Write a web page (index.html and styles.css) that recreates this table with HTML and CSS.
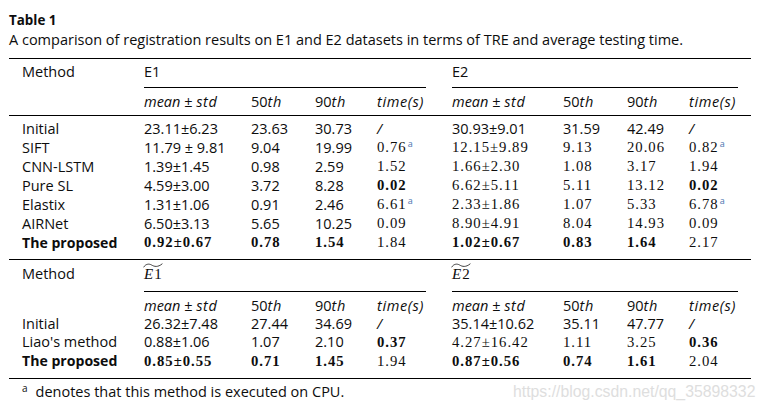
FILE: index.html
```html
<!DOCTYPE html>
<html lang="en">
<head>
<meta charset="utf-8">
<title>Table 1</title>
<link rel="stylesheet" href="styles.css">
</head>
<body>
<div class="page">
  <div class="title">Table 1</div>
  <div class="caption">A comparison of registration results on E1 and E2 datasets in terms of TRE and average testing time.</div>
  <div class="table">
    <div class="grid head">
      <div class="m">Method</div>
      <div class="group g1">E1</div>
      <div class="group g2">E2</div>
    </div>
    <div class="grid sub">
      <div></div>
      <div><span class="it">mean</span> ± <span class="it sp">std</span></div>
      <div>50<span class="it sp">th</span></div>
      <div>90<span class="it sp">th</span></div>
      <div><span class="it sp">time(s)</span></div>
      <div><span class="it">mean</span> ± <span class="it sp">std</span></div>
      <div>50<span class="it sp">th</span></div>
      <div>90<span class="it sp">th</span></div>
      <div><span class="it sp">time(s)</span></div>
    </div>
    <div class="grid body">
      <div class="m">Initial</div><div>23.11±6.23</div><div>23.63</div><div>30.73</div><div class="it">/</div><div>30.93±9.01</div><div>31.59</div><div>42.49</div><div class="it">/</div>
      <div class="m">SIFT</div><div>11.79 ± 9.81</div><div>9.04</div><div>19.99</div><div class="s">0.76<span class="fn">a</span></div><div class="s">12.15±9.89</div><div class="s">9.13</div><div class="s">20.06</div><div class="s">0.82<span class="fn">a</span></div>
      <div class="m">CNN-LSTM</div><div>1.39±1.45</div><div>0.98</div><div>2.59</div><div class="s">1.52</div><div class="s">1.66±2.30</div><div class="s">1.08</div><div class="s">3.17</div><div class="s">1.94</div>
      <div class="m">Pure SL</div><div>4.59±3.00</div><div>3.72</div><div>8.28</div><div class="s b">0.02</div><div class="s">6.62±5.11</div><div class="s">5.11</div><div class="s">13.12</div><div class="s b">0.02</div>
      <div class="m">Elastix</div><div>1.31±1.06</div><div>0.91</div><div>2.46</div><div class="s">6.61<span class="fn">a</span></div><div class="s">2.33±1.86</div><div class="s">1.07</div><div class="s">5.33</div><div class="s">6.78<span class="fn">a</span></div>
      <div class="m">AIRNet</div><div>6.50±3.13</div><div>5.65</div><div>10.25</div><div class="s">0.09</div><div class="s">8.90±4.91</div><div class="s">8.04</div><div class="s">14.93</div><div class="s">0.09</div>
      <div class="m bs">The proposed</div><div class="s b">0.92±0.67</div><div class="s b">0.78</div><div class="s b">1.54</div><div class="s">1.84</div><div class="s b">1.02±0.67</div><div class="s b">0.83</div><div class="s b">1.64</div><div class="s">2.17</div>
    </div>
    <div class="grid head head2">
      <div class="m">Method</div>
      <div class="group g1"><span class="tl"><span class="tE">E</span>1<svg class="tilde" viewBox="0 0 20 5" aria-hidden="true"><path d="M0.6 4.3 C2.6 1 5.8 0.4 8.6 2 C11.4 3.6 14.6 4.6 19.4 0.7" fill="none" stroke="#111" stroke-width="0.8"/></svg></span></div>
      <div class="group g2"><span class="tl"><span class="tE">E</span>2<svg class="tilde" viewBox="0 0 20 5" aria-hidden="true"><path d="M0.6 4.3 C2.6 1 5.8 0.4 8.6 2 C11.4 3.6 14.6 4.6 19.4 0.7" fill="none" stroke="#111" stroke-width="0.8"/></svg></span></div>
    </div>
    <div class="grid sub sub2">
      <div></div>
      <div><span class="it">mean</span> ± <span class="it sp">std</span></div>
      <div>50<span class="it sp">th</span></div>
      <div>90<span class="it sp">th</span></div>
      <div><span class="it sp">time(s)</span></div>
      <div><span class="it">mean</span> ± <span class="it sp">std</span></div>
      <div>50<span class="it sp">th</span></div>
      <div>90<span class="it sp">th</span></div>
      <div><span class="it sp">time(s)</span></div>
    </div>
    <div class="grid body body2">
      <div class="m">Initial</div><div>26.32±7.48</div><div>27.44</div><div>34.69</div><div class="it">/</div><div>35.14±10.62</div><div>35.11</div><div>47.77</div><div class="it">/</div>
      <div class="m">Liao's method</div><div>0.88±1.06</div><div>1.07</div><div>2.10</div><div class="s b">0.37</div><div class="s">4.27±16.42</div><div class="s">1.11</div><div class="s">3.25</div><div class="s b">0.36</div>
      <div class="m bs">The proposed</div><div class="s b">0.85±0.55</div><div class="s b">0.71</div><div class="s b">1.45</div><div class="s">1.94</div><div class="s b">0.87±0.56</div><div class="s b">0.74</div><div class="s b">1.61</div><div class="s">2.04</div>
    </div>
  </div>
  <div class="footnote"><span class="fmark">a</span>denotes that this method is executed on CPU.</div>
  <div class="watermark">https://blog.csdn.net/qq_35898332</div>
</div>
</body>
</html>
```
FILE: styles.css
```css
body {
  margin: 0;
  background: #fff;
}

.page {
  position: relative;
  width: 742px;
  padding: 11px 0 0 9px;
  font-family: "Open Sans", "Noto Sans", sans-serif;
  font-size: 14.5px;
  line-height: 19px;
  color: #0d0d0d;
}

.title {
  font-weight: 700;
  font-size: 13.4px;
}

.table {
  margin-top: 9px;
  border-top: 1px solid #000;
}

.grid {
  display: grid;
  grid-template-columns: 135px 107px 64px 62px 75px 111px 64px 62px 62px;
  white-space: nowrap;
}

.m {
  padding-left: 13px;
}

.head {
  padding-top: 3px;
}

.head .m {
  padding-bottom: 6px;
}

.group {
  padding-bottom: 6px;
  border-bottom: 1px solid #000;
}

.g1 {
  grid-column: 2 / 6;
  margin-right: 26px;
}

.g2 {
  grid-column: 6 / 10;
  margin-right: 13px;
}

.sub {
  padding: 4px 0;
  border-bottom: 1px solid #000;
}

.body {
  padding: 3px 0 7px;
  border-bottom: 1px solid #000;
}

.head2 {
  padding-top: 4px;
}

.head2 .m,
.head2 .group {
  padding-bottom: 7px;
}

.sub2 {
  padding: 3.5px 0 0;
  border-bottom: none;
}

.body2 {
  padding: 0 0 7.5px;
  line-height: 18.5px;
}

.it {
  font-style: italic;
}

.sp {
  letter-spacing: 0.6px;
}

.s {
  font-family: "Liberation Serif", serif;
  font-size: 14.7px;
  letter-spacing: 1px;
}

.b {
  font-weight: 700;
}

.bs {
  font-weight: 700;
  font-size: 14.1px;
}

.fn {
  font-family: "Open Sans", sans-serif;
  font-size: 9px;
  line-height: 0;
  vertical-align: 5px;
  letter-spacing: 0;
  color: #4b74b0;
  margin-left: 1px;
}

.tl {
  position: relative;
  display: inline-block;
  font-family: "Liberation Serif", serif;
  font-size: 15px;
}

.tE {
  font-style: italic;
  margin-right: 1px;
}

.tilde {
  position: absolute;
  left: -1px;
  top: -2px;
  width: 20px;
  height: 5px;
}

.footnote {
  padding: 3px 0 0 13px;
}

.fmark {
  font-size: 10px;
  line-height: 0;
  vertical-align: 5px;
  margin-right: 8px;
}

.watermark {
  position: absolute;
  left: 513px;
  top: 382px;
  font-family: "Liberation Sans", Arial, sans-serif;
  font-size: 15.8px;
  line-height: 19px;
  color: #dedede;
  white-space: nowrap;
}
```
